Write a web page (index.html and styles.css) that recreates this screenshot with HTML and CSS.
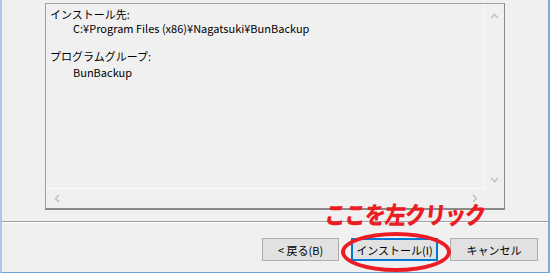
FILE: index.html
```html
<!DOCTYPE html>
<html>

<head>
    <meta charset="UTF-8">
    <title>セットアップ - BunBackup</title>
    <link rel="stylesheet" href="styles.css">
</head>

<body>

    <div class="window">
        <div class="memo-wrap">
            <div class="memo">
                <div class="memo-text">
                    <p>インストール先:</p>
                    <p class="indent">C:¥Program Files (x86)¥Nagatsuki¥BunBackup</p>
                    <p>&nbsp;</p>
                    <p>プログラムグループ:</p>
                    <p class="indent last">BunBackup</p>
                </div>
                <div class="vscroll">
                    <svg class="arrow" width="9" height="6" viewBox="0 0 9 6"><path d="M1 5 L4.5 1.5 L8 5" fill="none" stroke="#c2c2c2" stroke-width="1.6"/></svg>
                    <svg class="arrow" width="9" height="6" viewBox="0 0 9 6"><path d="M1 1 L4.5 4.5 L8 1" fill="none" stroke="#c2c2c2" stroke-width="1.6"/></svg>
                </div>
                <div class="hscroll">
                    <svg class="arrow" width="6" height="9" viewBox="0 0 6 9"><path d="M5 1 L1.5 4.5 L5 8" fill="none" stroke="#c2c2c2" stroke-width="1.6"/></svg>
                    <svg class="arrow" width="6" height="9" viewBox="0 0 6 9"><path d="M1 1 L4.5 4.5 L1 8" fill="none" stroke="#c2c2c2" stroke-width="1.6"/></svg>
                </div>
                <div class="corner"></div>
            </div>
        </div>

        <div class="separator"></div>

        <div class="buttons">
            <button type="button" class="btn">&lt;&nbsp;戻る(B)</button>
            <div class="install-wrap">
                <button type="button" class="btn btn-default">インストール(I)</button>
                <span class="note">ここを左クリック</span>
                <span class="ring"></span>
            </div>
            <button type="button" class="btn btn-cancel">キャンセル</button>
        </div>
    </div>

</body>

</html>
```

FILE: styles.css
```css
body {
    margin: 0;
    background-color: #f0f0f0;
    font-family: "Noto Sans CJK JP", "Liberation Sans", sans-serif;
    font-size: 11px;
    color: #000;
}

.window {
    width: 546px;
    height: 272px;
    border-left: 2px solid #a8c8ec;
    border-right: 2px solid #7fa9d9;
    border-bottom: 1px solid #6ba2dc;
    display: flex;
    flex-direction: column;
}

.memo-wrap {
    padding: 3px 0 0 43px;
}

.memo {
    width: 458px;
    height: 204px;
    border: 1px solid #a0a0a0;
    border-right-color: #8a8a8a;
    border-bottom: 2px solid #8a8a8a;
    display: grid;
    grid-template-columns: 1fr 19px;
    grid-template-rows: 1fr 19px;
}

.memo-text {
    padding: 3px 0 0 4px;
    border-right: 1px solid #fafafa;
    border-bottom: 1px solid #fafafa;
}

.memo-text p {
    margin: 0;
    line-height: 14px;
    height: 14px;
    white-space: nowrap;
}

.memo-text .indent {
    padding-left: 23px;
}

.memo-text .last {
    margin-top: 2px;
}

.vscroll {
    display: flex;
    flex-direction: column;
    justify-content: space-between;
    align-items: center;
    padding: 9px 0 6px;
}

.hscroll {
    display: flex;
    justify-content: space-between;
    align-items: center;
    padding: 0 7px 0 8px;
}

.arrow {
    display: block;
}

.separator {
    margin-top: 11px;
    height: 1px;
    background-color: #a0a0a0;
    border-bottom: 1px solid #ffffff;
}

.buttons {
    display: flex;
    justify-content: flex-end;
    gap: 12px;
    padding: 15px 10px 0 0;
}

.btn {
    height: 23px;
    padding: 0;
    font-family: inherit;
    font-size: 11px;
    color: #000;
    background-color: #e1e1e1;
    border: 1px solid #adadad;
    width: 77px;
    white-space: nowrap;
}

.btn-default {
    width: 87px;
    border: 1px solid #0078d7;
    box-shadow: inset 0 0 0 1px #0078d7;
}

.btn-cancel {
    width: 88px;
}

.install-wrap {
    position: relative;
}

.note {
    position: absolute;
    left: -26px;
    top: -37px;
    font-size: 21px;
    line-height: 26px;
    font-weight: 900;
    color: #ec1c24;
    white-space: nowrap;
    letter-spacing: -1px;
    transform: skewX(-6deg) scaleY(1.15);
}

.ring {
    position: absolute;
    left: -10px;
    top: -6px;
    width: 102px;
    height: 32px;
    border: 4px solid #ec1c24;
    border-radius: 50%;
}
```
